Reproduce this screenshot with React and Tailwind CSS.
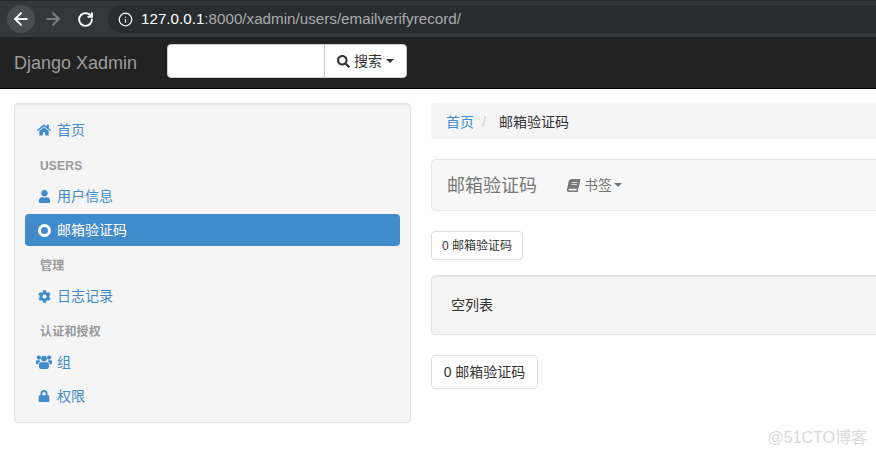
import React from 'react';
import { ArrowLeft, ArrowRight, RotateCw, Info } from 'lucide-react';
import { FaHome, FaUser, FaCog, FaLock, FaBook, FaSearch } from 'react-icons/fa';

const FONT = "font-['Liberation_Sans','Noto_Sans_CJK_SC',sans-serif]";

function Caret({ className }) {
  return <span className={`inline-block w-0 h-0 border-x-4 border-x-transparent border-t-4 ${className}`} />;
}

function UsersIcon() {
  return (
    <svg width="16" height="14" viewBox="0 0 16 14" fill="currentColor">
      <circle cx="8" cy="3.6" r="2.9" />
      <circle cx="2.9" cy="2.6" r="2.1" />
      <circle cx="13.1" cy="2.6" r="2.1" />
      <path d="M4.6 7.2h6.8c1 0 1.6.8 1.6 2v2.9c0 1.1-.8 1.9-1.9 1.9H4.9C3.800 14 3 13.200 3 12.100V9.200c0-1.200.6-2 1.600-2z" />
      <path d="M0 6.400C0 5.600.5 5.200 1.200 5.200h2.300c.2.700.600 1.200 1 1.500-1.400.200-2.300 1.200-2.400 2.600H1.100C.400 9.300 0 8.900 0 8.200z" />
      <path d="M16 6.400c0-.800-.5-1.200-1.200-1.200h-2.300c-.2.700-.600 1.200-1 1.500 1.400.200 2.300 1.200 2.400 2.600h1c.700 0 1.100-.400 1.100-1.100z" />
    </svg>
  );
}

function NavItem({ icon, label, active }) {
  return (
    <div className={`h-8 flex items-center pl-[9px] pr-3 rounded text-sm ${active ? 'bg-[#428bca] text-white' : 'text-[#428bca]'}`}>
      <span className="w-5 flex justify-center text-sm">{icon}</span>
      <span className="ml-[3px]">{label}</span>
    </div>
  );
}

function NavHeader({ children }) {
  return (
    <div className="h-[34px] pl-[15px] pt-[10px] text-xs font-bold leading-[20px] text-[#999] tracking-[0.2px]">
      {children}
    </div>
  );
}

function Sidebar() {
  return (
    <div className="w-[397px] shrink-0 h-[320px] bg-[#f5f5f5] border border-[#e3e3e3] rounded p-[10px] shadow-[inset_0_1px_1px_rgba(0,0,0,0.05)]">
      <NavItem icon={<FaHome />} label="首页" />
      <NavHeader>USERS</NavHeader>
      <div className="flex flex-col gap-[2px]">
        <NavItem icon={<FaUser className="text-[13px]" />} label="用户信息" />
        <NavItem
          icon={<span className="block w-[13px] h-[13px] rounded-full border-[3px] border-white" />}
          label="邮箱验证码"
          active
        />
      </div>
      <NavHeader>管理</NavHeader>
      <NavItem icon={<FaCog className="text-[13px]" />} label="日志记录" />
      <NavHeader>认证和授权</NavHeader>
      <div className="flex flex-col gap-[2px]">
        <NavItem icon={<UsersIcon />} label="组" />
        <NavItem icon={<FaLock className="text-xs" />} label="权限" />
      </div>
    </div>
  );
}

function Content() {
  return (
    <div className="ml-5 w-[600px] shrink-0 text-sm text-[#333]">
      <div className="h-9 bg-[#f5f5f5] rounded flex items-center pl-[15px] pt-[1px]">
        <span className="text-[#428bca]">首页</span>
        <span className="ml-2 text-[#ccc]">/</span>
        <span className="ml-[13px]">邮箱验证码</span>
      </div>
      <div className="mt-5 h-[52px] bg-[#f8f8f8] border border-[#e7e7e7] rounded flex items-center pl-[15px]">
        <span className="text-lg text-[#777] pt-[1px]">邮箱验证码</span>
        <span className="ml-[30px] flex items-center text-[#777] text-[13px]">
          <FaBook className="text-[13px] -skew-x-12" />
          <span className="ml-[4px] text-sm">书签</span>
          <Caret className="ml-[2px] border-t-[#777]" />
        </span>
      </div>
      <div className="mt-5 w-[92px] h-[29px] bg-white border border-[#ddd] rounded flex items-center justify-center text-xs">
        0 邮箱验证码
      </div>
      <div className="mt-[15px] h-[60px] bg-[#f5f5f5] border border-[#e3e3e3] rounded flex items-center pl-[19px] shadow-[inset_0_1px_1px_rgba(0,0,0,0.05)]">
        空列表
      </div>
      <div className="mt-5 w-[107px] h-[34px] bg-white border border-[#ddd] rounded flex items-center justify-center">
        0 邮箱验证码
      </div>
    </div>
  );
}

export default function App() {
  return (
    <div className={`relative w-[876px] h-[455px] overflow-hidden bg-white ${FONT}`}>
      {/* browser chrome */}
      <div className="h-[37px] bg-[#33373a] border-t border-[#24282b] flex items-center pl-[7px]">
        <div className="w-7 h-7 rounded-full bg-[#4a4d50] flex items-center justify-center">
          <ArrowLeft size={20} strokeWidth={2.4} className="text-white" />
        </div>
        <ArrowRight size={20} strokeWidth={2.4} className="ml-[8px] text-[#7d7f82]" />
        <RotateCw size={17} strokeWidth={2.8} className="ml-[14px] text-white" />
        <div className="ml-[14px] flex-1 h-7 rounded-l-full bg-[#292d30] flex items-center pl-[10px] text-[15.2px]">
          <Info size={15} className="text-white" />
          <span className="ml-[8px] text-white">127.0.0.1</span>
          <span className="text-[#a9abad]">:8000/xadmin/users/emailverifyrecord/</span>
        </div>
      </div>
      {/* navbar */}
      <div className="h-[52px] bg-[#222] border-b border-black flex pl-[14px] pt-[7px]">
        <span className="w-[153px] mt-[7px] leading-[24px] text-lg text-[#9d9d9d]">Django Xadmin</span>
        <div className="flex h-[34px] bg-white rounded border border-[#ccc] text-sm text-[#333]">
          <div className="w-[157px] border-r border-[#ccc]" />
          <div className="w-[81px] flex items-center justify-center gap-1">
            <FaSearch className="text-[13px]" />
            <span>搜索</span>
            <Caret className="border-t-[#333]" />
          </div>
        </div>
      </div>
      {/* page */}
      <div className="flex pl-[14px] pt-[14px]">
        <Sidebar />
        <Content />
      </div>
      <div className="absolute right-[9px] top-[426px] text-base text-[#d9d9d9]">@51CTO博客</div>
    </div>
  );
}
